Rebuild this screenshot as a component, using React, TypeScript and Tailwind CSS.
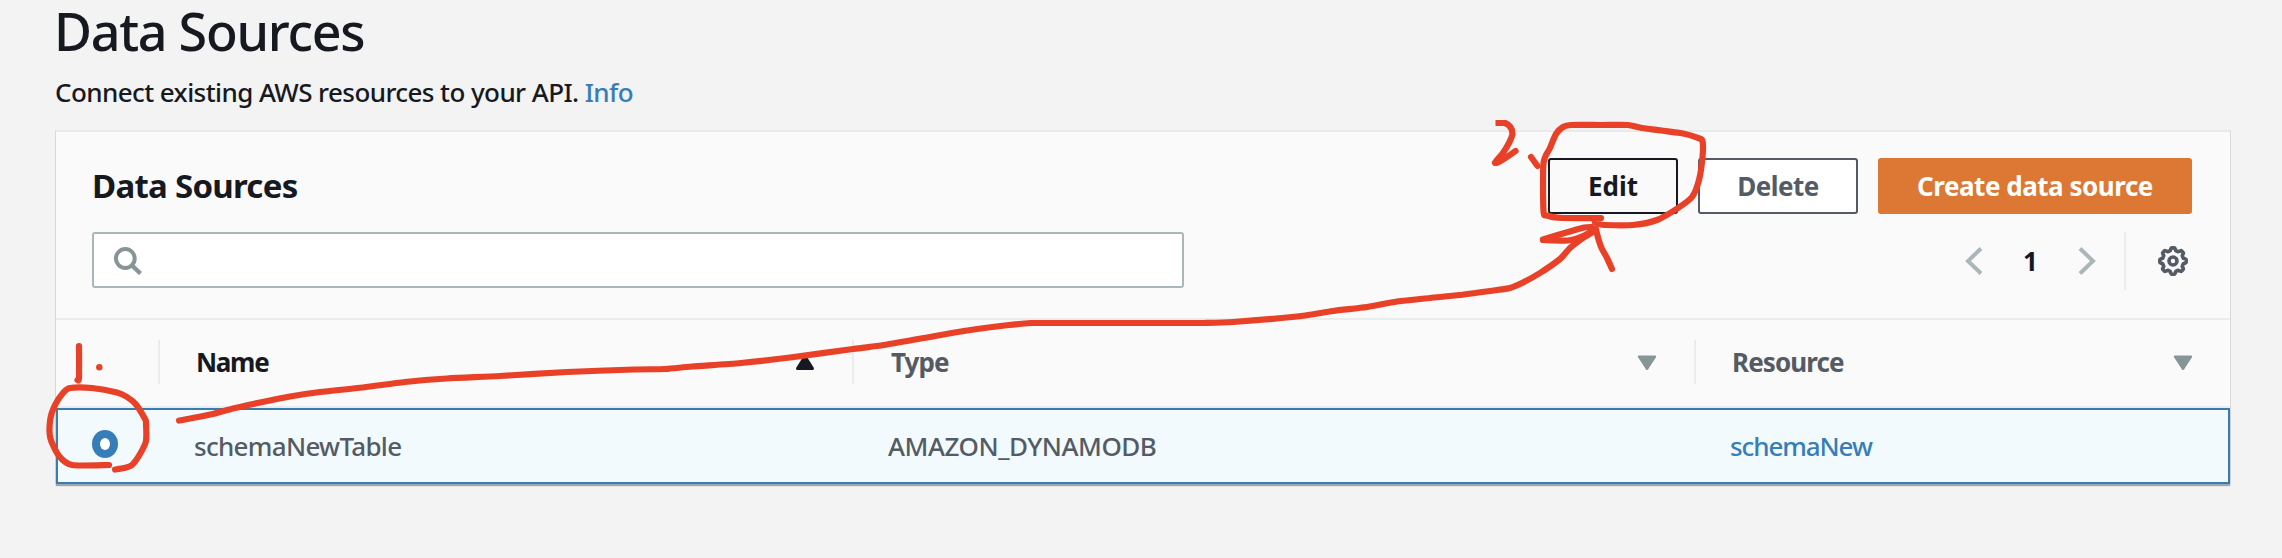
import type { ReactNode } from "react";

type Point = [number, number];

/** Spline through the given points, as an SVG path. */
function smooth(points: Point[]): string {
  const at = (i: number) => points[Math.max(0, Math.min(points.length - 1, i))];
  let d = `M${points[0][0]} ${points[0][1]}`;
  for (let i = 0; i < points.length - 1; i++) {
    const [p0, p1, p2, p3] = [at(i - 1), at(i), at(i + 1), at(i + 2)];
    d += `C${p1[0] + (p2[0] - p0[0]) / 8} ${p1[1] + (p2[1] - p0[1]) / 8} ${p2[0] - (p3[0] - p1[0]) / 8} ${p2[1] - (p3[1] - p1[1]) / 8} ${p2[0]} ${p2[1]}`;
  }
  return d;
}

const strokes: Point[][] = [
  [[79, 346], [79, 378], [77.5, 380]],
  [[109, 465], [72, 465], [59, 456], [50.3, 438], [50.3, 419], [55, 405], [63, 393], [70, 388], [92, 388], [117, 392.5], [127, 397], [136, 404.5], [145, 419], [146, 423], [146, 441], [140, 454], [132, 465], [124, 468], [115, 469.5]],
  [[179, 420.5], [213, 414], [233, 408.5], [260, 402.5], [290, 396.5], [320, 392], [363, 387.5], [405, 382], [447, 378.5], [500, 376], [567, 372], [634, 369.5], [665, 369], [692, 366.5], [741, 363], [790, 357.5], [853, 349], [884, 345], [924, 338], [964, 331], [1009, 325], [1031, 323]],
  [[1031, 323], [1203, 323]],
  [[1203, 323], [1233, 322], [1297, 316.5], [1333, 311], [1367, 307], [1397, 301.5], [1430, 298], [1460, 295], [1497, 290], [1510, 288], [1523, 282.5], [1540, 273], [1560, 259], [1570, 248], [1583, 238], [1596, 230]],
  [[1596, 230], [1599, 241], [1602, 249], [1607, 258], [1612, 269]],
  [[1592, 227], [1584, 227.5], [1568, 232], [1543, 239.5]],
  [[1543, 240], [1568, 240.5], [1583, 236], [1596, 229]],
  [[1601, 218], [1562, 218], [1547, 215.5], [1543.5, 211], [1543.5, 163], [1550, 148], [1556, 134], [1563, 127], [1571, 125], [1601, 125], [1628, 125], [1642, 128], [1683, 133.5], [1698, 138], [1702.5, 141], [1702.5, 157], [1699, 180], [1692, 197], [1678, 208], [1657, 220], [1633, 225], [1605, 225], [1598, 223.5], [1595, 222]],
  [[1503, 153], [1495, 162.5], [1499, 162], [1507, 157], [1515.5, 151]],
  [[1531, 157], [1537.5, 166]],
];

function Annotations() {
  return (
    <svg className="pointer-events-none absolute inset-0" width="2282" height="558" fill="none" stroke="#e84127" strokeWidth="6.2" strokeLinecap="round" strokeLinejoin="round">
      {strokes.map((s, i) => (
        <path key={i} d={smooth(s)} />
      ))}
      <path d="M1495.5 123H1505Q1512.5 126 1512.5 134Q1511 141 1503 153" strokeLinecap="butt" />
      <circle cx="99.3" cy="367.3" r="3.2" fill="#e84127" stroke="none" />
    </svg>
  );
}

function SortIcon({ up = false }: { up?: boolean }) {
  return up ? (
    <svg width="20" height="20" viewBox="0 0 20 20" className="shrink-0">
      <path d="M10 4.5 17.5 16.5H2.5Z" fill="#16191f" stroke="#16191f" strokeWidth="3" strokeLinejoin="round" />
    </svg>
  ) : (
    <svg width="20" height="20" viewBox="0 0 20 20" className="shrink-0">
      <path d="M10 16.8 2 4.6H18Z" fill="#879596" stroke="#879596" strokeWidth="2.4" strokeLinejoin="round" />
    </svg>
  );
}

function Chevron({ flip = false }: { flip?: boolean }) {
  return (
    <svg width="18" height="28" viewBox="0 0 18 28" className={flip ? "-scale-x-100" : ""}>
      <path d="M16 1.5 3 14 16 26.5" fill="none" stroke="#aab7b8" strokeWidth="4" />
    </svg>
  );
}

function gearPath(): string {
  const pts: string[] = [];
  for (let i = 0; i < 96; i++) {
    const a = (i / 96) * Math.PI * 2;
    const wave = Math.max(-1, Math.min(1, 1.9 * Math.cos(8 * a)));
    const r = 11.9 + 1.3 * wave;
    pts.push(`${(15 + r * Math.cos(a)).toFixed(2)} ${(15 + r * Math.sin(a)).toFixed(2)}`);
  }
  return `M${pts.join("L")}Z`;
}

function Gear() {
  return (
    <svg width="30" height="30" viewBox="0 0 30 30" fill="none" stroke="#545b64" strokeLinejoin="round">
      <path d={gearPath()} strokeWidth="3.6" />
      <circle cx="15" cy="15" r="4" strokeWidth="3.6" />
    </svg>
  );
}

function HeaderCell({ children, className }: { children: ReactNode; className: string }) {
  return <div className={`flex h-11 items-center justify-between font-bold text-[#545b64] ${className}`}>{children}</div>;
}

export default function App() {
  return (
    <div className="relative h-[558px] w-[2282px] overflow-hidden bg-[#f3f3f3] font-['Noto_Sans',sans-serif] text-[26px] leading-9 font-medium text-[#16191f]">
      <header className="pl-14">
        <h1 className="-ml-[2px] text-[52px] leading-[61px] tracking-[-1.27px]">Data Sources</h1>
        <p className="mt-[13px] -ml-px tracking-[-0.58px]">
          Connect existing AWS resources to your API. <a className="text-[#377db8]">Info</a>
        </p>
      </header>

      <main className="mt-5 ml-[55px] w-[2176px] border-x border-t-2 border-x-[#d5d9d9] border-t-[#eaeaea] bg-[#fafafa]">
        <section className="flex h-[188px] flex-col gap-[18px] border-b-2 border-[#eaeded] pt-[26px] pr-[38px] pl-9">
          <div className="flex h-14 items-center justify-between">
            <h2 className="text-[33px] leading-[54px] font-bold tracking-[-0.73px]">Data Sources</h2>
            <div className="flex gap-5 font-bold">
              <button className="h-14 w-[130px] rounded-[3px] border-2 border-[#16191f] bg-[#fafafa]">Edit</button>
              <button className="h-14 w-40 rounded-[3px] border-2 border-[#545b64] bg-white tracking-[-0.5px] text-[#545b64]">Delete</button>
              <button className="h-14 w-[314px] rounded-[3px] bg-[#dc7833] tracking-[-0.47px] text-white">Create data source</button>
            </div>
          </div>
          <div className="flex h-14 items-start justify-between">
            <div className="flex h-14 w-[1092px] items-center rounded-[3px] border-2 border-[#aab7b8] bg-white pl-5">
              <svg width="30" height="30" viewBox="0 0 30 30" fill="none" stroke="#879596">
                <circle cx="11.3" cy="13.5" r="9.4" strokeWidth="4" />
                <path d="M17.5 20 26.5 28.5" strokeWidth="4.4" />
              </svg>
            </div>
            <div className="flex h-[58px] items-center">
              <Chevron />
              <span className="w-[95px] text-center font-bold">1</span>
              <Chevron flip />
              <span className="ml-[28px] h-[58px] w-0.5 bg-[#eaeded]" />
              <span className="mr-1 ml-8">
                <Gear />
              </span>
            </div>
          </div>
        </section>

        <div className="grid h-[88px] grid-cols-[104px_694px_842px_1fr] border-b-2 border-[#eaeded] pt-5">
          <HeaderCell className="border-r-2 border-[#eaeded]">{null}</HeaderCell>
          <HeaderCell className="border-r-2 border-[#eaeded] pr-[37px] pl-9">
            <span className="tracking-[-1.3px] text-[#16191f]">Name</span>
            <SortIcon up />
          </HeaderCell>
          <HeaderCell className="border-r-2 border-[#eaeded] pr-[37px] pl-[37px]">
            <span className="tracking-[-0.9px]">Type</span>
            <SortIcon />
          </HeaderCell>
          <HeaderCell className="pr-[37px] pl-[36px]">
            <span className="tracking-[-0.9px]">Resource</span>
            <SortIcon />
          </HeaderCell>
        </div>

        <div className="grid h-[76px] grid-cols-[102px_694px_842px_1fr] items-center border-2 border-[#3b7cae] bg-[#f2fafd] text-[#545b64] shadow-[0_2px_1px_#9aa9b2]">
          <div className="pl-[34px]">
            <span className="-mt-1 flex h-7 w-[26px] items-center justify-center rounded-[50%] bg-[#377db8]">
              <span className="h-3 w-2.5 rounded-[50%] bg-white" />
            </span>
          </div>
          <div className="pl-[34px] tracking-[-0.7px]">schemaNewTable</div>
          <div className="pl-[34px] tracking-[-0.5px]">AMAZON_DYNAMODB</div>
          <a className="pl-[34px] tracking-[-1.1px] text-[#377db8]">schemaNew</a>
        </div>
      </main>
      <Annotations />
    </div>
  );
}
